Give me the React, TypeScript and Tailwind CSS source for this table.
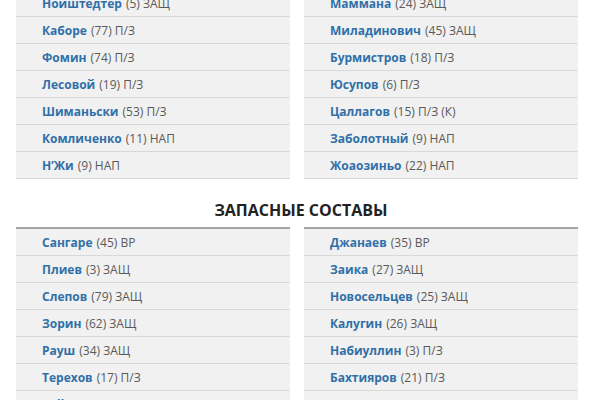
import React from 'react';

type Player = { name: string; num: number; pos: string };

const startHome: Player[] = [
  { name: 'Нойштедтер', num: 5, pos: 'ЗАЩ' },
  { name: 'Каборе', num: 77, pos: 'П/З' },
  { name: 'Фомин', num: 74, pos: 'П/З' },
  { name: 'Лесовой', num: 19, pos: 'П/З' },
  { name: 'Шиманьски', num: 53, pos: 'П/З' },
  { name: 'Комличенко', num: 11, pos: 'НАП' },
  { name: 'Н\u2019Жи', num: 9, pos: 'НАП' },
];

const startAway: Player[] = [
  { name: 'Маммана', num: 24, pos: 'ЗАЩ' },
  { name: 'Миладинович', num: 45, pos: 'ЗАЩ' },
  { name: 'Бурмистров', num: 18, pos: 'П/З' },
  { name: 'Юсупов', num: 6, pos: 'П/З' },
  { name: 'Цаллагов', num: 15, pos: 'П/З (К)' },
  { name: 'Заболотный', num: 9, pos: 'НАП' },
  { name: 'Жоаозиньо', num: 22, pos: 'НАП' },
];

const subsHome: Player[] = [
  { name: 'Сангаре', num: 45, pos: 'ВР' },
  { name: 'Плиев', num: 3, pos: 'ЗАЩ' },
  { name: 'Слепов', num: 79, pos: 'ЗАЩ' },
  { name: 'Зорин', num: 62, pos: 'ЗАЩ' },
  { name: 'Рауш', num: 34, pos: 'ЗАЩ' },
  { name: 'Терехов', num: 17, pos: 'П/З' },
  { name: 'Гойлис', num: 14, pos: 'П/З' },
];

const subsAway: Player[] = [
  { name: 'Джанаев', num: 35, pos: 'ВР' },
  { name: 'Заика', num: 27, pos: 'ЗАЩ' },
  { name: 'Новосельцев', num: 25, pos: 'ЗАЩ' },
  { name: 'Калугин', num: 26, pos: 'ЗАЩ' },
  { name: 'Набиуллин', num: 3, pos: 'П/З' },
  { name: 'Бахтияров', num: 21, pos: 'П/З' },
  { name: 'Попов', num: 7, pos: 'П/З' },
];

function Row({ p }: { p: Player }) {
  return (
    <div className="h-[27px] flex items-center pl-[26px] pt-[1px] bg-[#f1f1f1] border-b border-[#d9d9d9] text-[12px] whitespace-nowrap">
      <span className="font-bold text-[#3070a8]">{p.name}</span>
      <span className="text-[#5a5a5a] ml-[4px]">({p.num}) {p.pos}</span>
    </div>
  );
}

function Column({ players, topBorder }: { players: Player[]; topBorder?: boolean }) {
  return (
    <div className={topBorder ? 'border-t-2 border-[#a3a3a3]' : ''}>
      {players.map((p) => (
        <Row key={p.name} p={p} />
      ))}
    </div>
  );
}

export default function App() {
  return (
    <div
      className="w-[600px] h-[400px] overflow-hidden bg-white"
      style={{ fontFamily: '"Open Sans", "Noto Sans", sans-serif' }}
    >
      <div className="-mt-[10px] px-[16px]">
        <div className="grid grid-cols-2 gap-x-[14px] w-[562px]">
          <Column players={startHome} />
          <Column players={startAway} />
        </div>

        {/* Заголовок запасных */}
        <div className="pt-[21px] pb-[7px] flex justify-center">
          <h2 className="text-[16px] leading-[20px] font-bold text-[#222] ml-[2px]">ЗАПАСНЫЕ СОСТАВЫ</h2>
        </div>

        <div className="grid grid-cols-2 gap-x-[14px] w-[562px]">
          <Column players={subsHome} topBorder />
          <Column players={subsAway} topBorder />
        </div>
      </div>
    </div>
  );
}
